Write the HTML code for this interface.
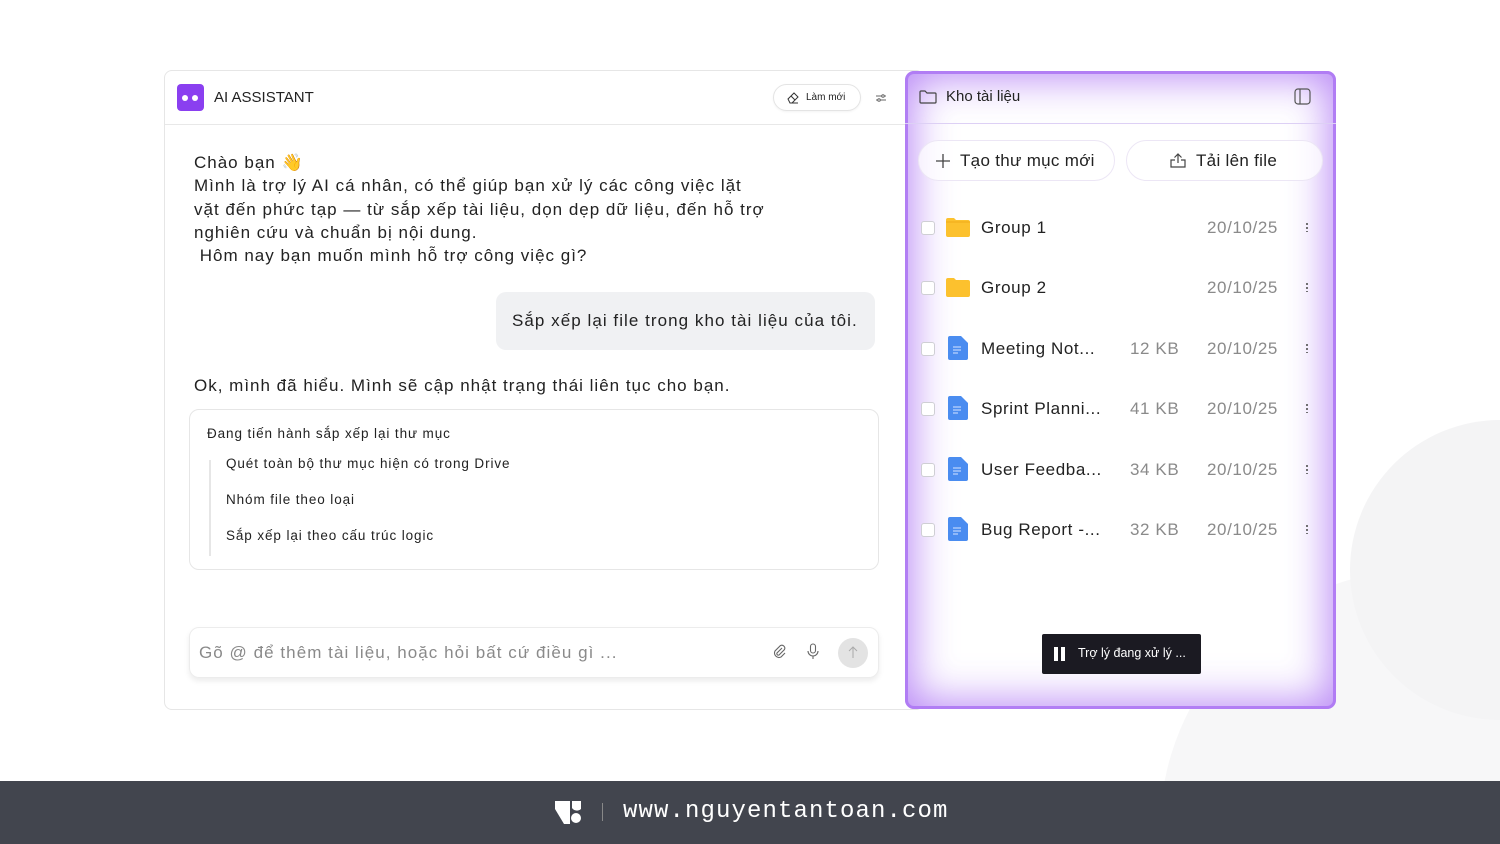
<!DOCTYPE html>
<html style="width:1500px;height:844px;overflow:hidden"><head><meta charset="utf-8"><style>
*{box-sizing:border-box;margin:0;padding:0}
body{width:1500px;height:844px;background:#fff;position:relative;overflow:hidden;font-family:"Liberation Sans","Noto Sans CJK SC",sans-serif;color:#222}
.clip{position:absolute;left:0;top:0;width:1500px;height:781px;overflow:hidden}
.deco1{position:absolute;left:1160px;top:570px;width:520px;height:520px;border-radius:50%;background:#f7f7f8}
.deco2{position:absolute;left:1350px;top:420px;width:300px;height:300px;border-radius:50%;background:#f4f4f5}
.chat{position:absolute;left:164px;top:70px;width:760px;height:640px;border:1px solid #e6e6e6;border-radius:8px;background:#fff}
.hdr{height:54px;border-bottom:1px solid #e8e8e8;position:relative}
.logo{position:absolute;left:12px;top:13px;width:27px;height:27px;border-radius:4px;background:#8a3ff0}
.logo i{position:absolute;top:11px;width:6px;height:6px;border-radius:50%;background:#fff}
.t{position:absolute;left:49px;top:18px;font-size:15px;color:#222}
.btn{position:absolute;left:608px;top:13px;width:88px;height:27px;border:1px solid #e4e4e4;border-radius:14px;font-size:10px;padding:7px 0 0 32px;box-shadow:0 1px 2px rgba(0,0,0,.05)}
.msg{position:absolute;left:29px;top:80px;font-size:17px;line-height:23.3px;color:#222;letter-spacing:1px}
.bub{position:absolute;left:331px;top:221px;width:379px;height:58px;background:#f0f1f3;border-radius:10px;font-size:17px;padding:19px 0 0 16px;letter-spacing:1.05px}
.ok{position:absolute;left:29px;top:305px;font-size:17px;letter-spacing:1px}
.steps{position:absolute;left:24px;top:338px;width:690px;height:161px;border:1px solid #e6e6e6;border-radius:10px;font-size:13.5px;letter-spacing:.9px}
.steps .line{position:absolute;left:19px;top:50px;width:2px;height:96px;background:#e6e6e6}
.steps div{position:absolute}
.inp{position:absolute;left:24px;top:556px;width:690px;height:51px;border:1px solid #ececec;border-radius:10px;box-shadow:0 3px 6px rgba(0,0,0,.08);font-size:17px;color:#8a8a8a;padding:15px 0 0 9px;letter-spacing:1.05px}
.send{position:absolute;left:648px;top:10px;width:30px;height:30px;border-radius:50%;background:#e3e3e3}
.panel{position:absolute;left:905px;top:71px;width:431px;height:638px;border-radius:9px;background:#fff;box-shadow:inset 0 0 40px 8px rgba(175,120,245,.85),inset 0 0 0 3px #b486f3}
.phdr{height:53px;border-bottom:1px solid #ddd0f5;position:relative}
.pbtn{position:absolute;top:69px;height:41px;border:1px solid #ece6f5;border-radius:21px;background:rgba(255,255,255,.7);font-size:17px;color:#222;letter-spacing:.3px}
.row{position:absolute;left:0;width:431px;height:30px;font-size:17px;letter-spacing:.6px}
.cb{position:absolute;left:16px;top:8px;width:14px;height:14px;border:1px solid #cfcfd4;border-radius:3px;background:#fff}
.nm{position:absolute;left:76px;top:5px;color:#222}
.sz{position:absolute;left:225px;top:5px;color:#8a8a8a}
.dt{position:absolute;left:302px;top:5px;color:#8a8a8a}
.dots{position:absolute;left:401px;top:9px;width:2px;height:10px;background:radial-gradient(circle,#666 1px,transparent 1.2px) 0 0/2px 4px repeat-y}
.toast{position:absolute;left:1042px;top:634px;width:159px;height:40px;background:#1b1a22;border-radius:2px;color:#fff;font-size:12.5px;padding:12px 0 0 36px}
.foot{position:absolute;left:0;top:781px;width:1500px;height:63px;background:#42454e}
.url{position:absolute;left:623px;top:17px;color:#fff;font-size:24px;letter-spacing:1.1px;font-family:"Liberation Mono",monospace}
</style></head><body>
<div class="clip"><div class="deco1"></div><div class="deco2"></div></div>
<div class="chat">
 <div class="hdr">
  <div class="logo"><i style="left:5px"></i><i style="left:15px"></i></div>
  <div class="t">AI ASSISTANT</div>
  <div class="btn"><svg style="position:absolute;left:12px;top:6px" width="14" height="14" viewBox="0 0 14 14" fill="none" stroke="#333" stroke-width="1"><path d="M2 8l6-6 4 4-6 6H4z M5 5l4 4 M6 12h6"/></svg>Làm mới</div>
  <svg style="position:absolute;left:709px;top:20px" width="14" height="14" viewBox="0 0 14 14" fill="none" stroke="#666" stroke-width="1"><path d="M2 5h10M2 9h10"/><circle cx="9" cy="5" r="1.3" fill="#fff"/><circle cx="5" cy="9" r="1.3" fill="#fff"/></svg>
 </div>
 <div class="msg">Chào bạn 👋<br>Mình là trợ lý AI cá nhân, có thể giúp bạn xử lý các công việc lặt<br>vặt đến phức tạp — từ sắp xếp tài liệu, dọn dẹp dữ liệu, đến hỗ trợ<br>nghiên cứu và chuẩn bị nội dung.<br>&nbsp;Hôm nay bạn muốn mình hỗ trợ công việc gì?</div>
 <div class="bub">Sắp xếp lại file trong kho tài liệu của tôi.</div>
 <div class="ok">Ok, mình đã hiểu. Mình sẽ cập nhật trạng thái liên tục cho bạn.</div>
 <div class="steps"><span class="line"></span>
  <div style="left:17px;top:16px">Đang tiến hành sắp xếp lại thư mục</div>
  <div style="left:36px;top:46px">Quét toàn bộ thư mục hiện có trong Drive</div>
  <div style="left:36px;top:82px">Nhóm file theo loại</div>
  <div style="left:36px;top:118px">Sắp xếp lại theo cấu trúc logic</div>
 </div>
 <div class="inp">Gõ @ để thêm tài liệu, hoặc hỏi bất cứ điều gì ...
  <svg style="position:absolute;left:582px;top:16px" width="16" height="16" viewBox="0 0 16 16" fill="none" stroke="#666" stroke-width="1.1"><path d="M10 4l-5 5a1.5 1.5 0 002 2l5.5-5.5a3 3 0 00-4-4L3 7a4.5 4.5 0 006 6l4-4"/></svg>
  <svg style="position:absolute;left:616px;top:15px" width="14" height="18" viewBox="0 0 14 18" fill="none" stroke="#666" stroke-width="1.1"><rect x="4.5" y="1" width="5" height="9" rx="2.5"/><path d="M2 8a5 5 0 0010 0M7 13v3"/></svg>
  <div class="send"><svg style="position:absolute;left:9px;top:8px" width="12" height="13" viewBox="0 0 12 13" fill="none" stroke="#aaa" stroke-width="1"><path d="M6 12V1M2 5l4-4 4 4"/></svg></div>
 </div>
</div>
<div class="panel">
 <div class="phdr">
  <svg style="position:absolute;left:14px;top:18px" width="18" height="16" viewBox="0 0 18 16" fill="none" stroke="#444" stroke-width="1.2"><path d="M1 3a1 1 0 011-1h4l2 2h8a1 1 0 011 1v8a1 1 0 01-1 1H2a1 1 0 01-1-1z"/></svg>
  <div style="position:absolute;left:41px;top:17px;font-size:15px;color:#222">Kho tài liệu</div>
  <svg style="position:absolute;left:389px;top:17px" width="17" height="17" viewBox="0 0 17 17" fill="none" stroke="#555" stroke-width="1.2"><rect x="1" y="1" width="15" height="15" rx="3"/><path d="M6 1v15"/></svg>
 </div>
 <div class="pbtn" style="left:13px;width:197px;padding:10px 0 0 41px"><svg style="position:absolute;left:16px;top:12px" width="16" height="16" viewBox="0 0 16 16" stroke="#444" stroke-width="1.3"><path d="M8 1v14M1 8h14"/></svg>Tạo thư mục mới</div>
 <div class="pbtn" style="left:221px;width:197px;padding:10px 0 0 69px"><svg style="position:absolute;left:42px;top:11px" width="18" height="17" viewBox="0 0 18 17" fill="none" stroke="#444" stroke-width="1.2"><path d="M9 11V2M5.5 5.5L9 2l3.5 3.5M6 8H2v7h14V8h-4"/></svg>Tải lên file</div>
 <div class="row" style="top:142px"><span class="cb"></span><svg style="position:absolute;left:41px;top:4px" width="24" height="20"><path d="M0 3a2 2 0 012-2h6l2 2h12a2 2 0 012 2v13a2 2 0 01-2 2H2a2 2 0 01-2-2z" fill="#fcc12e"/><path d="M0 5h24" stroke="#f1ab18"/></svg><span class="nm">Group 1</span><span class="dt">20/10/25</span><span class="dots"></span></div>
 <div class="row" style="top:202px"><span class="cb"></span><svg style="position:absolute;left:41px;top:4px" width="24" height="20"><path d="M0 3a2 2 0 012-2h6l2 2h12a2 2 0 012 2v13a2 2 0 01-2 2H2a2 2 0 01-2-2z" fill="#fcc12e"/></svg><span class="nm">Group 2</span><span class="dt">20/10/25</span><span class="dots"></span></div>
 <div class="row" style="top:263px"><span class="cb"></span><svg style="position:absolute;left:43px;top:2px" width="20" height="24"><path d="M2 0h11l7 7v15a2 2 0 01-2 2H2a2 2 0 01-2-2V2a2 2 0 012-2z" fill="#4a8cf0"/><path d="M5 11h8M5 14h8M5 17h5" stroke="#d6e5ff"/></svg><span class="nm">Meeting Not...</span><span class="sz">12 KB</span><span class="dt">20/10/25</span><span class="dots"></span></div>
 <div class="row" style="top:323px"><span class="cb"></span><svg style="position:absolute;left:43px;top:2px" width="20" height="24"><path d="M2 0h11l7 7v15a2 2 0 01-2 2H2a2 2 0 01-2-2V2a2 2 0 012-2z" fill="#4a8cf0"/><path d="M5 11h8M5 14h8M5 17h5" stroke="#d6e5ff"/></svg><span class="nm">Sprint Planni...</span><span class="sz">41 KB</span><span class="dt">20/10/25</span><span class="dots"></span></div>
 <div class="row" style="top:384px"><span class="cb"></span><svg style="position:absolute;left:43px;top:2px" width="20" height="24"><path d="M2 0h11l7 7v15a2 2 0 01-2 2H2a2 2 0 01-2-2V2a2 2 0 012-2z" fill="#4a8cf0"/><path d="M5 11h8M5 14h8M5 17h5" stroke="#d6e5ff"/></svg><span class="nm">User Feedba...</span><span class="sz">34 KB</span><span class="dt">20/10/25</span><span class="dots"></span></div>
 <div class="row" style="top:444px"><span class="cb"></span><svg style="position:absolute;left:43px;top:2px" width="20" height="24"><path d="M2 0h11l7 7v15a2 2 0 01-2 2H2a2 2 0 01-2-2V2a2 2 0 012-2z" fill="#4a8cf0"/><path d="M5 11h8M5 14h8M5 17h5" stroke="#d6e5ff"/></svg><span class="nm">Bug Report -...</span><span class="sz">32 KB</span><span class="dt">20/10/25</span><span class="dots"></span></div>
</div>
<div class="toast"><span style="position:absolute;left:12px;top:13px;width:4px;height:14px;background:#fff"></span><span style="position:absolute;left:19px;top:13px;width:4px;height:14px;background:#fff"></span>Trợ lý đang xử lý ...</div>
<div class="foot">
 <svg style="position:absolute;left:555px;top:20px" width="27" height="23" viewBox="0 0 27 23"><path d="M0 0h15v23h-6L0 8z" fill="#fff"/><path d="M17 0h9v8a6 6 0 01-9-1z" fill="#fff"/><circle cx="21" cy="17" r="5" fill="#fff"/></svg>
 <div style="position:absolute;left:602px;top:22px;width:1px;height:18px;background:#888"></div>
 <div class="url">www.nguyentantoan.com</div>
</div>
</body></html>
